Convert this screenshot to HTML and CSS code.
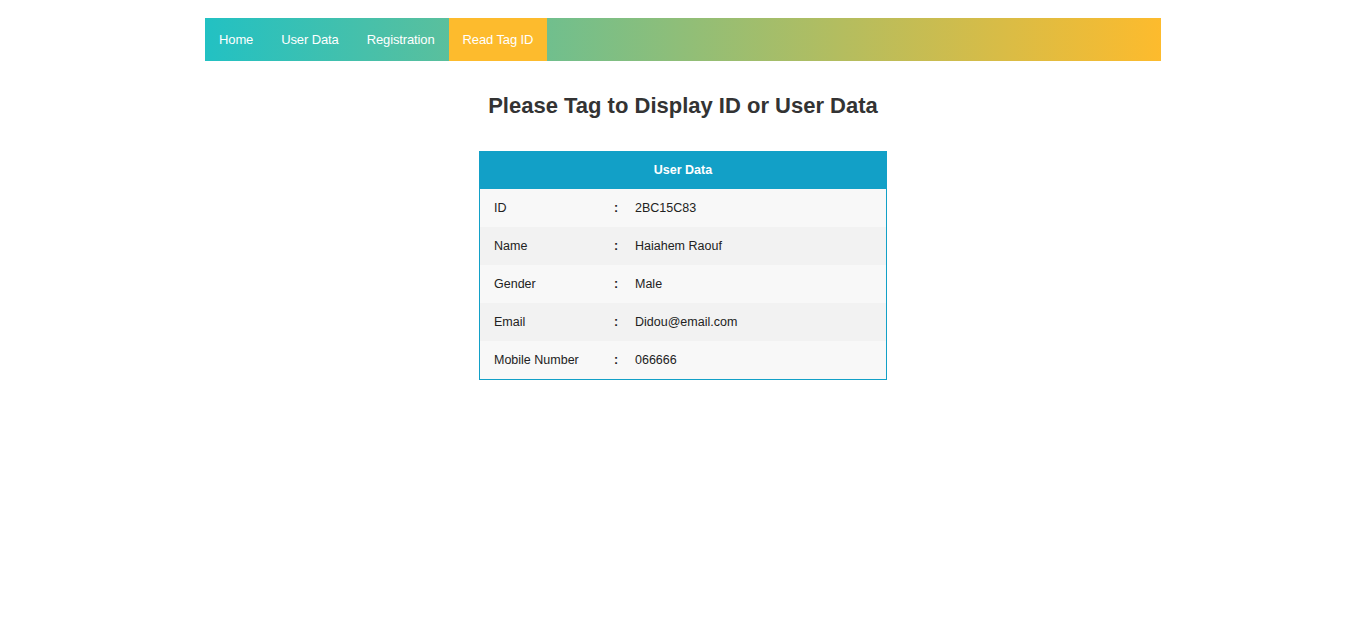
FILE: index.html
```html
<!DOCTYPE html>
<html>
<head>
<meta charset="utf-8">
<link rel="stylesheet" href="styles.css">
</head>
<body>
<div class="page">
  <nav class="topnav">
    <a class="nav-link">Home</a>
    <a class="nav-link">User Data</a>
    <a class="nav-link">Registration</a>
    <a class="nav-link active">Read Tag ID</a>
  </nav>
  <h3 class="title">Please Tag to Display ID or User Data</h3>
  <table class="user-table">
    <thead>
      <tr><th colspan="3">User Data</th></tr>
    </thead>
    <tbody>
      <tr class="odd"><td class="label">ID</td><td class="colon">:</td><td class="value">2BC15C83</td></tr>
      <tr class="even"><td class="label">Name</td><td class="colon">:</td><td class="value">Haiahem Raouf</td></tr>
      <tr class="odd"><td class="label">Gender</td><td class="colon">:</td><td class="value">Male</td></tr>
      <tr class="even"><td class="label">Email</td><td class="colon">:</td><td class="value">Didou@email.com</td></tr>
      <tr class="odd"><td class="label">Mobile Number</td><td class="colon">:</td><td class="value">066666</td></tr>
    </tbody>
  </table>
</div>
</body>
</html>
```

FILE: styles.css
```css
html, body {
  margin: 0;
  padding: 0;
  background: #fff;
  font-family: "Liberation Sans", Arial, sans-serif;
}
.page {
  width: 956px;
  margin: 0 auto;
  padding-top: 18px;
}
.topnav {
  display: flex;
  height: 43px;
  background: linear-gradient(90deg, #22c1c3 0%, #fdbb2d 100%);
}
.nav-link {
  display: block;
  color: #fff;
  font-size: 13px;
  letter-spacing: -0.12px;
  line-height: 42px;
  padding: 1px 14px 0;
}
.nav-link.active {
  background: #fdbb2d;
}
.title {
  margin: 32px 0 0;
  text-align: center;
  font-size: 22px;
  font-weight: bold;
  line-height: 26px;
  color: #333;
}
.user-table {
  margin: 32px auto 0;
  width: 408px;
  border-collapse: collapse;
  border: 1px solid #12a0c7;
  font-size: 12.5px;
  color: #222;
}
.user-table th {
  background: #12a0c7;
  color: #fff;
  font-size: 12.5px;
  font-weight: bold;
  height: 36px;
  padding: 0 0 1px;
  text-align: center;
}
.user-table td {
  height: 38px;
  padding: 0;
}
.odd { background: #f8f8f8; }
.even { background: #f2f2f2; }
.label {
  width: 120px;
  padding-left: 14px !important;
}
.colon {
  width: 21px;
  font-weight: bold;
}
```
